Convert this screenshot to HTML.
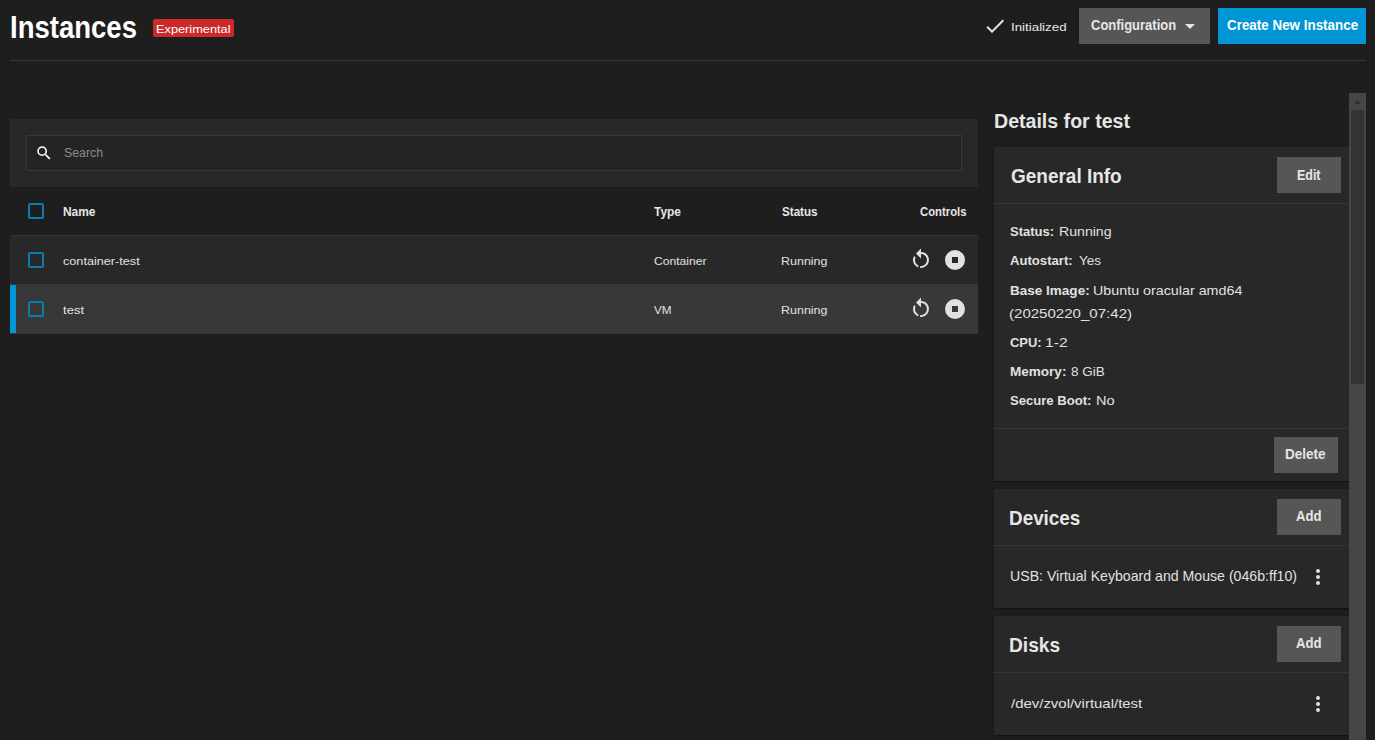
<!DOCTYPE html>
<html><head><meta charset="utf-8"><title>Instances</title>
<style>
html,body{margin:0;padding:0;width:1375px;height:740px;overflow:hidden;background:#1e1e1e;font-family:"Liberation Sans",sans-serif}
.b,.i,.t{position:absolute}
.i svg{display:block}
.t{white-space:nowrap;transform-origin:0 0}
</style></head><body>
<div class="b" style="left:153px;top:19px;width:81px;height:18px;background:#ce2929;border-radius:2px"></div>
<div class="i" style="left:983px;top:14px"><svg viewBox="0 0 24 24" width="24" height="24"><path fill="#e6e6e6" d="M21,7L9,19L3.5,13.5L4.91,12.09L9,16.17L19.59,5.59L21,7Z"/></svg></div>
<div class="b" style="left:1079px;top:8px;width:131px;height:36px;background:#565656"></div>
<div class="i" style="left:1178px;top:14px"><svg viewBox="0 0 24 24" width="24" height="24"><path fill="#e6e6e6" d="M7,10L12,15L17,10H7Z"/></svg></div>
<div class="b" style="left:1218px;top:8px;width:148px;height:36px;background:#0095d5"></div>
<div class="b" style="left:10px;top:60px;width:1356px;height:1px;background:#383838"></div>
<div class="b" style="left:10px;top:119px;width:968px;height:68px;background:#282828"></div>
<div class="b" style="left:26px;top:135px;width:936px;height:36px;background:#242424;border:1px solid #383838;box-sizing:border-box"></div>
<div class="i" style="left:35px;top:144px"><svg viewBox="0 0 24 24" width="18" height="18"><path fill="#ffffff" d="M9.5,3A6.5,6.5 0 0,1 16,9.5C16,11.110 15.41,12.59 14.44,13.73L14.71,14H15.5L20.5,19L19,20.5L14,15.5V14.71L13.73,14.44C12.59,15.41 11.11,16 9.5,16A6.5,6.5 0 0,1 3,9.5A6.5,6.5 0 0,1 9.5,3M9.5,5C7,5 5,7 5,9.5C5,12 7,14 9.5,14C12,14 14,12 14,9.5C14,7 12,5 9.5,5Z"/></svg></div>
<div class="b" style="left:10px;top:235px;width:968px;height:1px;background:#333333"></div>
<div class="b" style="left:10px;top:236px;width:968px;height:48px;background:#282828"></div>
<div class="b" style="left:10px;top:284px;width:968px;height:50px;background:#383838"></div>
<div class="b" style="left:10px;top:285px;width:6px;height:48px;background:#0095d5"></div>
<div class="b" style="left:28px;top:203px;width:16px;height:16px;border:2px solid #0a7db0;box-sizing:border-box;border-radius:2px"></div>
<div class="b" style="left:28px;top:252px;width:16px;height:16px;border:2px solid #0a7db0;box-sizing:border-box;border-radius:2px"></div>
<div class="b" style="left:28px;top:301px;width:16px;height:16px;border:2px solid #0a7db0;box-sizing:border-box;border-radius:2px"></div>
<div class="i" style="left:909px;top:248px"><svg viewBox="0 0 24 24" width="24" height="24"><path fill="#e1e1e1" d="M12,4C14.1,4 16.1,4.8 17.6,6.3C20.7,9.4 20.7,14.5 17.6,17.6C15.8,19.5 13.3,20.2 10.9,19.9L11.4,17.9C13.1,18.1 14.9,17.5 16.2,16.2C18.5,13.9 18.5,10.1 16.2,7.700C15.1,6.6 13.5,6 12,6V10.6L7,5.6L12,0.6V4M6.3,17.6C3.7,15 3.3,11 5.1,7.9L6.6,9.4C5.5,11.6 5.9,14.4 7.8,16.2C8.3,16.7 8.9,17.1 9.6,17.4L9,19.4C8,19 7.1,18.4 6.3,17.6Z"/></svg></div>
<div class="i" style="left:943px;top:248px"><svg viewBox="0 0 24 24" width="24" height="24"><path fill="#e1e1e1" d="M12,2A10,10 0 0,0 2,12A10,10 0 0,0 12,22A10,10 0 0,0 22,12A10,10 0 0,0 12,2M9,9H15V15H9"/></svg></div>
<div class="i" style="left:909px;top:297px"><svg viewBox="0 0 24 24" width="24" height="24"><path fill="#e1e1e1" d="M12,4C14.1,4 16.1,4.8 17.6,6.3C20.7,9.4 20.7,14.5 17.6,17.6C15.8,19.5 13.3,20.2 10.9,19.9L11.4,17.9C13.1,18.1 14.9,17.5 16.2,16.2C18.5,13.9 18.5,10.1 16.2,7.700C15.1,6.6 13.5,6 12,6V10.6L7,5.6L12,0.6V4M6.3,17.6C3.7,15 3.3,11 5.1,7.9L6.6,9.4C5.5,11.6 5.9,14.4 7.8,16.2C8.3,16.7 8.9,17.1 9.6,17.4L9,19.4C8,19 7.1,18.4 6.3,17.6Z"/></svg></div>
<div class="i" style="left:943px;top:297px"><svg viewBox="0 0 24 24" width="24" height="24"><path fill="#e1e1e1" d="M12,2A10,10 0 0,0 2,12A10,10 0 0,0 12,22A10,10 0 0,0 22,12A10,10 0 0,0 12,2M9,9H15V15H9"/></svg></div>
<div class="b" style="left:994px;top:147px;width:355px;height:334px;background:#282828;box-shadow:0 2px 1px -1px rgba(0,0,0,.2),0 1px 1px 0 rgba(0,0,0,.14),0 1px 3px 0 rgba(0,0,0,.12)"></div>
<div class="b" style="left:994px;top:203px;width:355px;height:1px;background:#363636"></div>
<div class="b" style="left:994px;top:428px;width:355px;height:1px;background:#363636"></div>
<div class="b" style="left:1277px;top:157px;width:64px;height:36px;background:#565656"></div>
<div class="b" style="left:1274px;top:437px;width:64px;height:36px;background:#565656"></div>
<div class="b" style="left:994px;top:489px;width:355px;height:119px;background:#282828;box-shadow:0 2px 1px -1px rgba(0,0,0,.2),0 1px 1px 0 rgba(0,0,0,.14),0 1px 3px 0 rgba(0,0,0,.12)"></div>
<div class="b" style="left:994px;top:545px;width:355px;height:1px;background:#363636"></div>
<div class="b" style="left:1277px;top:499px;width:64px;height:36px;background:#565656"></div>
<div class="i" style="left:1306px;top:565px"><svg viewBox="0 0 24 24" width="24" height="24"><path fill="#e1e1e1" d="M12,16A2,2 0 0,1 14,18A2,2 0 0,1 12,20A2,2 0 0,1 10,18A2,2 0 0,1 12,16M12,10A2,2 0 0,1 14,12A2,2 0 0,1 12,14A2,2 0 0,1 10,12A2,2 0 0,1 12,10M12,4A2,2 0 0,1 14,6A2,2 0 0,1 12,8A2,2 0 0,1 10,6A2,2 0 0,1 12,4Z"/></svg></div>
<div class="b" style="left:994px;top:616px;width:355px;height:119px;background:#282828;box-shadow:0 2px 1px -1px rgba(0,0,0,.2),0 1px 1px 0 rgba(0,0,0,.14),0 1px 3px 0 rgba(0,0,0,.12)"></div>
<div class="b" style="left:994px;top:672px;width:355px;height:1px;background:#363636"></div>
<div class="b" style="left:1277px;top:626px;width:64px;height:36px;background:#565656"></div>
<div class="i" style="left:1306px;top:692px"><svg viewBox="0 0 24 24" width="24" height="24"><path fill="#e1e1e1" d="M12,16A2,2 0 0,1 14,18A2,2 0 0,1 12,20A2,2 0 0,1 10,18A2,2 0 0,1 12,16M12,10A2,2 0 0,1 14,12A2,2 0 0,1 12,14A2,2 0 0,1 10,12A2,2 0 0,1 12,10M12,4A2,2 0 0,1 14,6A2,2 0 0,1 12,8A2,2 0 0,1 10,6A2,2 0 0,1 12,4Z"/></svg></div>
<div class="b" style="left:1349px;top:93px;width:17px;height:647px;background:#464646"></div>
<div class="b" style="left:1351px;top:110px;width:13px;height:274px;background:#333333"></div>
<svg class="i" style="left:1349px;top:93px" width="17" height="17"><polygon points="4.8,11 12.2,11 8.5,7" fill="#2e2e2e"/></svg>
<div class="t" id="t_inst" style="left:10.00px;top:12px;font-size:31.0px;line-height:31.0px;font-weight:700;transform:scaleX(0.8879);color:#ffffff">Instances</div>
<div class="t" id="t_exp" style="left:156.20px;top:24px;font-size:10.5px;line-height:10.5px;transform:scaleX(1.2155);color:#ffffff">Experimental</div>
<div class="t" id="t_init" style="left:1011.00px;top:22px;font-size:11.5px;line-height:11.5px;transform:scaleX(1.1585);color:#e6e6e6">Initialized</div>
<div class="t" id="t_conf" style="left:1090.50px;top:18px;font-size:14.5px;line-height:14.5px;font-weight:700;transform:scaleX(0.8955);color:#e6e6e6">Configuration</div>
<div class="t" id="t_create" style="left:1226.80px;top:18px;font-size:14.5px;line-height:14.5px;font-weight:700;transform:scaleX(0.9245);color:#ffffff">Create New Instance</div>
<div class="t" id="t_search" style="left:64.00px;top:147px;font-size:12.5px;line-height:12.5px;transform:scaleX(0.9873);color:#8c8c8c">Search</div>
<div class="t" id="h_name" style="left:63.00px;top:206px;font-size:12.0px;line-height:12.0px;font-weight:700;transform:scaleX(0.9948);color:#e6e6e6">Name</div>
<div class="t" id="h_type" style="left:654.00px;top:206px;font-size:12.5px;line-height:12.5px;font-weight:700;transform:scaleX(0.9525);color:#e6e6e6">Type</div>
<div class="t" id="h_status" style="left:782.00px;top:206px;font-size:12.5px;line-height:12.5px;font-weight:700;transform:scaleX(0.9300);color:#e6e6e6">Status</div>
<div class="t" id="h_ctrl" style="left:920.00px;top:206px;font-size:12.0px;line-height:12.0px;font-weight:700;transform:scaleX(0.9430);color:#e6e6e6">Controls</div>
<div class="t" id="r1_name" style="left:63.00px;top:256px;font-size:11.5px;line-height:11.5px;transform:scaleX(1.1007);color:#e1e1e1">container-test</div>
<div class="t" id="r1_type" style="left:654.00px;top:256px;font-size:11.5px;line-height:11.5px;transform:scaleX(1.0531);color:#e1e1e1">Container</div>
<div class="t" id="r1_stat" style="left:781.20px;top:256px;font-size:11.5px;line-height:11.5px;transform:scaleX(1.0850);color:#e1e1e1">Running</div>
<div class="t" id="r2_name" style="left:63.00px;top:305px;font-size:11.5px;line-height:11.5px;transform:scaleX(1.1348);color:#e1e1e1">test</div>
<div class="t" id="r2_type" style="left:654.00px;top:305px;font-size:11.5px;line-height:11.5px;transform:scaleX(1.0163);color:#e1e1e1">VM</div>
<div class="t" id="r2_stat" style="left:781.20px;top:305px;font-size:11.5px;line-height:11.5px;transform:scaleX(1.0850);color:#e1e1e1">Running</div>
<div class="t" id="d_title" style="left:994.00px;top:111px;font-size:20.0px;line-height:20.0px;font-weight:700;transform:scaleX(0.9785);color:#e6e6e6">Details for test</div>
<div class="t" id="g_title" style="left:1010.80px;top:166px;font-size:20.5px;line-height:20.5px;font-weight:700;transform:scaleX(0.9255);color:#e6e6e6">General Info</div>
<div class="t" id="b_edit" style="left:1297.00px;top:168px;font-size:14.0px;line-height:14.0px;font-weight:700;transform:scaleX(0.8881);color:#e6e6e6">Edit</div>
<div class="t" id="i1k" style="left:1010.00px;top:225px;font-size:13.5px;line-height:13.5px;font-weight:700;transform:scaleX(0.9621);color:#e1e1e1">Status:</div>
<div class="t" id="i1v" style="left:1059.00px;top:225px;font-size:13.5px;line-height:13.5px;transform:scaleX(1.0452);color:#e1e1e1">Running</div>
<div class="t" id="i2k" style="left:1010.00px;top:254px;font-size:13.5px;line-height:13.5px;font-weight:700;transform:scaleX(0.9719);color:#e1e1e1">Autostart:</div>
<div class="t" id="i2v" style="left:1078.50px;top:254px;font-size:13.5px;line-height:13.5px;transform:scaleX(1.0003);color:#e1e1e1">Yes</div>
<div class="t" id="i3k" style="left:1010.00px;top:284px;font-size:13.0px;line-height:13.0px;font-weight:700;transform:scaleX(1.0399);color:#e1e1e1">Base Image:</div>
<div class="t" id="i3v" style="left:1093.20px;top:284px;font-size:13.0px;line-height:13.0px;transform:scaleX(1.0991);color:#e1e1e1">Ubuntu oracular amd64</div>
<div class="t" id="i3v2" style="left:1009.00px;top:307px;font-size:13.0px;line-height:13.0px;transform:scaleX(1.1577);color:#e1e1e1">(20250220_07:42)</div>
<div class="t" id="i4k" style="left:1010.00px;top:336px;font-size:13.0px;line-height:13.0px;font-weight:700;transform:scaleX(0.9961);color:#e1e1e1">CPU:</div>
<div class="t" id="i4v" style="left:1045.20px;top:336px;font-size:13.0px;line-height:13.0px;transform:scaleX(1.2018);color:#e1e1e1">1-2</div>
<div class="t" id="i5k" style="left:1010.00px;top:365px;font-size:13.5px;line-height:13.5px;font-weight:700;transform:scaleX(1.0023);color:#e1e1e1">Memory:</div>
<div class="t" id="i5v" style="left:1071.00px;top:365px;font-size:13.5px;line-height:13.5px;transform:scaleX(0.9986);color:#e1e1e1">8 GiB</div>
<div class="t" id="i6k" style="left:1010.00px;top:394px;font-size:13.5px;line-height:13.5px;font-weight:700;transform:scaleX(0.9688);color:#e1e1e1">Secure Boot:</div>
<div class="t" id="i6v" style="left:1095.50px;top:394px;font-size:13.5px;line-height:13.5px;transform:scaleX(1.0822);color:#e1e1e1">No</div>
<div class="t" id="b_del" style="left:1285.00px;top:447px;font-size:14.0px;line-height:14.0px;font-weight:700;transform:scaleX(0.9658);color:#e6e6e6">Delete</div>
<div class="t" id="dev_title" style="left:1009.20px;top:507px;font-size:21.0px;line-height:21.0px;font-weight:700;transform:scaleX(0.8987);color:#e6e6e6">Devices</div>
<div class="t" id="b_add1" style="left:1295.90px;top:509px;font-size:14.5px;line-height:14.5px;font-weight:700;transform:scaleX(0.9049);color:#e6e6e6">Add</div>
<div class="t" id="dev1" style="left:1009.50px;top:569px;font-size:14.5px;line-height:14.5px;transform:scaleX(0.9746);color:#e1e1e1">USB: Virtual Keyboard and Mouse (046b:ff10)</div>
<div class="t" id="disk_title" style="left:1009.20px;top:635px;font-size:20.5px;line-height:20.5px;font-weight:700;transform:scaleX(0.9352);color:#e6e6e6">Disks</div>
<div class="t" id="b_add2" style="left:1295.90px;top:636px;font-size:14.5px;line-height:14.5px;font-weight:700;transform:scaleX(0.9049);color:#e6e6e6">Add</div>
<div class="t" id="disk1" style="left:1010.50px;top:697px;font-size:13.0px;line-height:13.0px;transform:scaleX(1.1495);color:#e1e1e1">/dev/zvol/virtual/test</div>
</body></html>
